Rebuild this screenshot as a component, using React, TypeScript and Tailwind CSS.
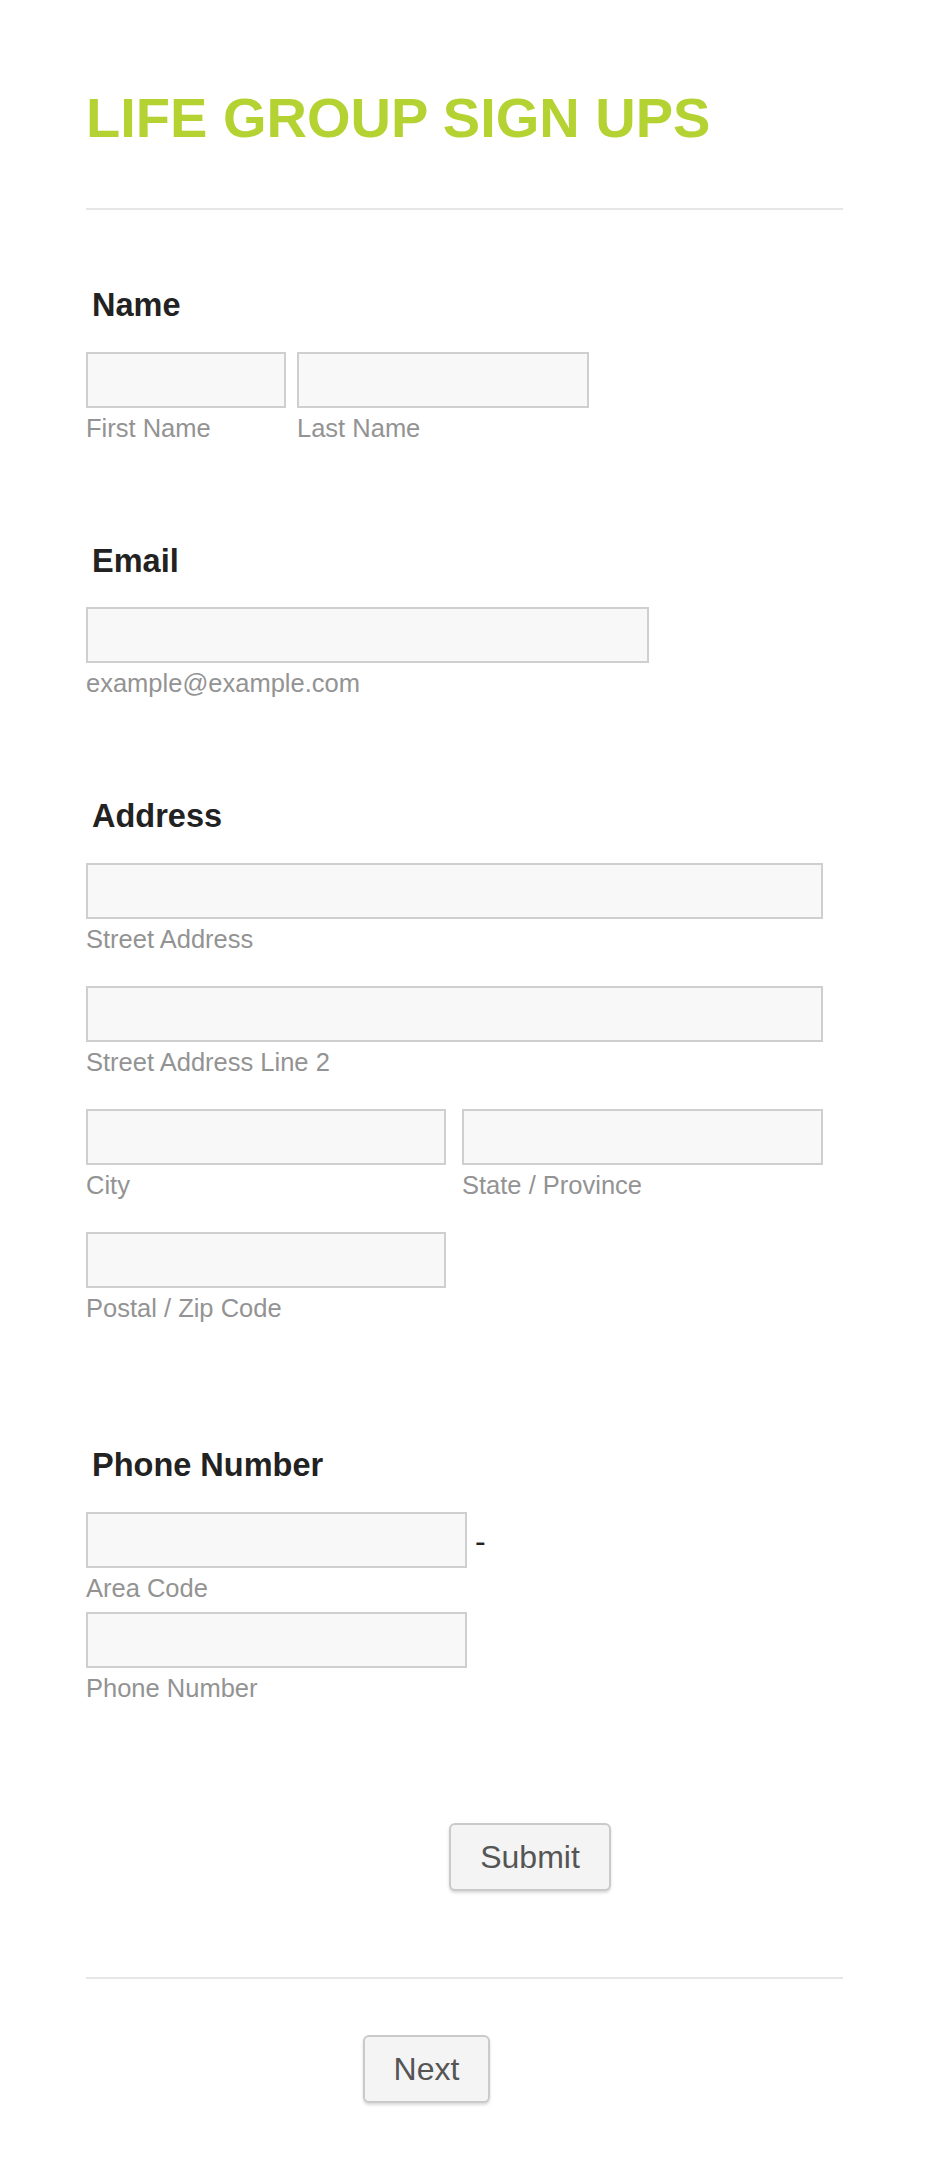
import React from "react";

const Field = ({ width, sub }: { width: string; sub: string }) => {
  return (
    <div className={`flex flex-col ${width}`}>
      <input
        type="text"
        className="h-[56px] w-full border-2 border-[#cfcfcf] bg-[#f8f8f8] outline-none"
      />
      <span className="mt-[7px] whitespace-nowrap text-[25.5px] leading-[26px] text-[#939393]">{sub}</span>
    </div>
  );
};

const Label = ({ children }: { children: string }) => (
  <div className="pl-[6px] text-[32.5px] font-bold leading-[32px] text-[#222]">{children}</div>
);

export default function App() {
  return (
    <div className="min-h-[2162px] w-full bg-white font-['Liberation_Sans',Arial,sans-serif]">
      <div className="ml-[86px] w-[757px] pt-[90px] pb-[56px]">
        <h1 className="whitespace-nowrap text-[56px] font-bold leading-[56px] text-[#b4d333]">LIFE GROUP SIGN UPS</h1>
        <div className="mt-[62px] h-[2px] bg-[#e6e6e6]" />

        {/* Name */}
        <div className="mt-[79px]">
          <Label>Name</Label>
          <div className="mt-[31px] flex gap-[11px]">
            <Field width="w-[200px]" sub="First Name" />
            <Field width="w-[292px]" sub="Last Name" />
          </div>
        </div>

        {/* Email */}
        <div className="mt-[104px]">
          <Label>Email</Label>
          <div className="mt-[30px]">
            <Field width="w-[563px]" sub="example@example.com" />
          </div>
        </div>

        {/* Address */}
        <div className="mt-[104px]">
          <Label>Address</Label>
          <div className="mt-[31px] flex flex-col gap-[34px]">
            <Field width="w-[737px]" sub="Street Address" />
            <Field width="w-[737px]" sub="Street Address Line 2" />
            <div className="flex gap-[16px]">
              <Field width="w-[360px]" sub="City" />
              <Field width="w-[361px]" sub="State / Province" />
            </div>
            <Field width="w-[360px]" sub="Postal / Zip Code" />
          </div>
        </div>

        {/* Phone */}
        <div className="mt-[128px]">
          <Label>Phone Number</Label>
          <div className="mt-[31px] flex items-start">
            <Field width="w-[381px]" sub="Area Code" />
            <span className="ml-[8px] mt-[13px] text-[32px] leading-[32px] text-[#222]">-</span>
          </div>
          <div className="mt-[11px]">
            <Field width="w-[381px]" sub="Phone Number" />
          </div>
        </div>

        <button
          type="button"
          className="ml-[363px] mt-[122px] flex h-[68px] w-[162px] items-center justify-center rounded-[6px] border-2 border-[#cacaca] bg-[#f4f4f4] text-[32px] leading-[32px] text-[#555] shadow-[0_2px_3px_rgba(0,0,0,0.15)]"
        >
          Submit
        </button>

        <div className="mt-[86px] h-[2px] bg-[#e6e6e6]" />

        <button
          type="button"
          className="ml-[277px] mt-[56px] flex h-[68px] w-[127px] items-center justify-center rounded-[6px] border-2 border-[#cacaca] bg-[#f4f4f4] text-[32px] leading-[32px] text-[#555] shadow-[0_2px_3px_rgba(0,0,0,0.15)]"
        >
          Next
        </button>
      </div>
    </div>
  );
}
